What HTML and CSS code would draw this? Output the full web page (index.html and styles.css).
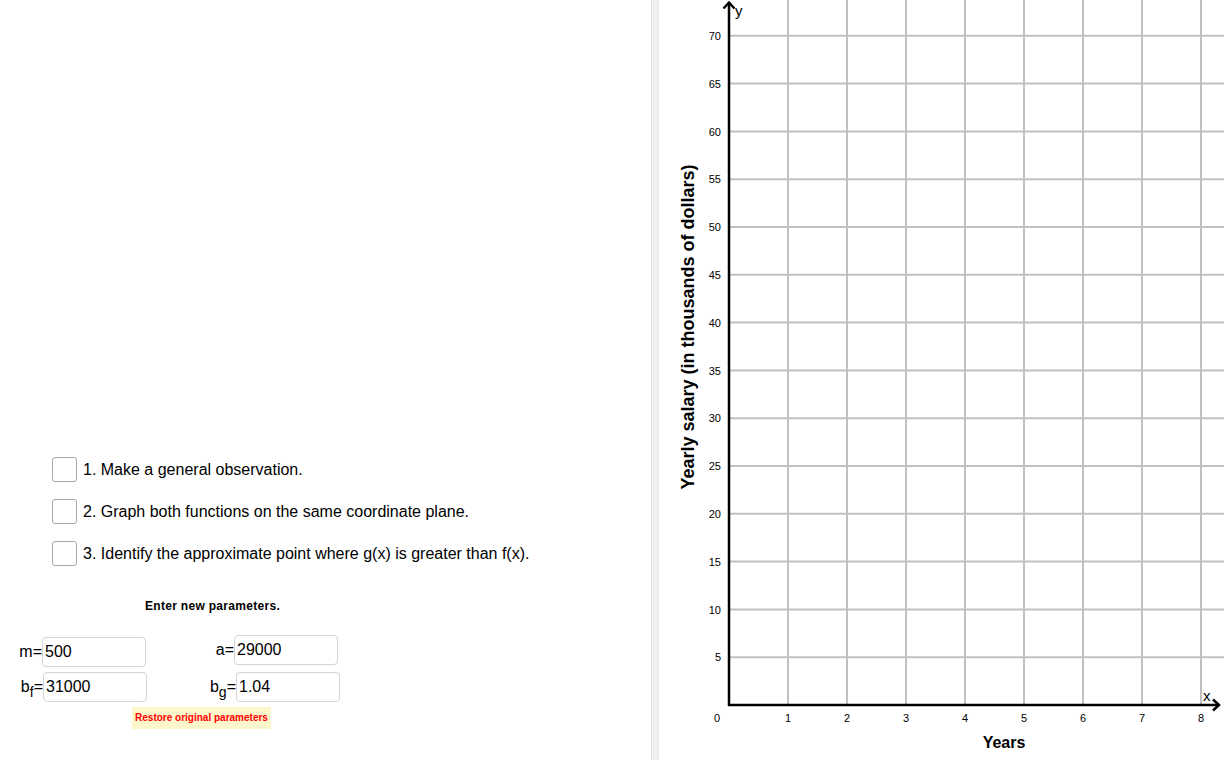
FILE: index.html
```html
<!DOCTYPE html>
<html>
<head>
<meta charset="utf-8">
<link rel="stylesheet" href="styles.css">
</head>
<body>
<div class="app">
  <div class="left">
    <ul class="tasks">
      <li class="task"><span class="box"></span><span class="task-text">1. Make a general observation.</span></li>
      <li class="task"><span class="box"></span><span class="task-text">2. Graph both functions on the same coordinate plane.</span></li>
      <li class="task"><span class="box"></span><span class="task-text">3. Identify the approximate point where g(x) is greater than f(x).</span></li>
    </ul>
    <div class="params-title">Enter new parameters.</div>
    <div class="fields">
      <div class="field-row">
        <div class="field f-m"><span class="flabel">m=</span><span class="finput">500</span></div>
        <div class="field f-a"><span class="flabel">a=</span><span class="finput">29000</span></div>
      </div>
      <div class="field-row">
        <div class="field f-bf"><span class="flabel">b<sub>f</sub>=</span><span class="finput">31000</span></div>
        <div class="field f-bg"><span class="flabel">b<sub>g</sub>=</span><span class="finput">1.04</span></div>
      </div>
    </div>
    <div class="restore">Restore original parameters</div>
  </div>
  <div class="divider"></div>
  <div class="graph">
    <svg class="plot" width="565" height="760" viewBox="659 0 565 760" xmlns="http://www.w3.org/2000/svg">
      <g stroke="#c0c0c0" stroke-width="2">
        <line x1="788" y1="0" x2="788" y2="705"/>
        <line x1="847" y1="0" x2="847" y2="705"/>
        <line x1="906" y1="0" x2="906" y2="705"/>
        <line x1="965" y1="0" x2="965" y2="705"/>
        <line x1="1024" y1="0" x2="1024" y2="705"/>
        <line x1="1083" y1="0" x2="1083" y2="705"/>
        <line x1="1142" y1="0" x2="1142" y2="705"/>
        <line x1="1201" y1="0" x2="1201" y2="705"/>
        <line x1="729" y1="657.2" x2="1224" y2="657.2"/>
        <line x1="729" y1="609.4" x2="1224" y2="609.4"/>
        <line x1="729" y1="561.6" x2="1224" y2="561.6"/>
        <line x1="729" y1="513.8" x2="1224" y2="513.8"/>
        <line x1="729" y1="466" x2="1224" y2="466"/>
        <line x1="729" y1="418.2" x2="1224" y2="418.2"/>
        <line x1="729" y1="370.4" x2="1224" y2="370.4"/>
        <line x1="729" y1="322.6" x2="1224" y2="322.6"/>
        <line x1="729" y1="274.8" x2="1224" y2="274.8"/>
        <line x1="729" y1="227" x2="1224" y2="227"/>
        <line x1="729" y1="179.2" x2="1224" y2="179.2"/>
        <line x1="729" y1="131.4" x2="1224" y2="131.4"/>
        <line x1="729" y1="83.6" x2="1224" y2="83.6"/>
        <line x1="729" y1="35.8" x2="1224" y2="35.8"/>
      </g>
      <g stroke="#000" stroke-width="2.5" fill="none">
        <line x1="729" y1="706" x2="729" y2="2"/>
        <polyline points="723.5,8.5 729,2.5 734.5,8.5"/>
        <line x1="728" y1="705" x2="1219" y2="705"/>
        <polyline points="1213,699.5 1219,705 1213,710.5"/>
      </g>
      <g class="ticks" text-anchor="end">
        <text x="721" y="40">70</text>
        <text x="721" y="88">65</text>
        <text x="721" y="136">60</text>
        <text x="721" y="183">55</text>
        <text x="721" y="231">50</text>
        <text x="721" y="279">45</text>
        <text x="721" y="327">40</text>
        <text x="721" y="375">35</text>
        <text x="721" y="422">30</text>
        <text x="721" y="470">25</text>
        <text x="721" y="518">20</text>
        <text x="721" y="566">15</text>
        <text x="721" y="614">10</text>
        <text x="721" y="661">5</text>
      </g>
      <g class="ticks" text-anchor="middle">
        <text x="717" y="722">0</text>
        <text x="788" y="722">1</text>
        <text x="847" y="722">2</text>
        <text x="906" y="722">3</text>
        <text x="965" y="722">4</text>
        <text x="1024" y="722">5</text>
        <text x="1083" y="722">6</text>
        <text x="1142" y="722">7</text>
        <text x="1201" y="722">8</text>
      </g>
      <text class="axname" x="735" y="16">y</text>
      <text class="axname" x="1203" y="701">x</text>
      <text class="axtitle" x="1004" y="748" text-anchor="middle">Years</text>
      <text class="axtitle axtitle-y" transform="translate(694,327) rotate(-90)" text-anchor="middle">Yearly salary (in thousands of dollars)</text>
    </svg>
  </div>
</div>
</body>
</html>
```
FILE: styles.css
```css
html, body {
  margin: 0;
  padding: 0;
  background: #fff;
  font-family: "Liberation Sans", Arial, sans-serif;
  color: #000;
}
.app {
  display: flex;
  width: 1224px;
  height: 760px;
  overflow: hidden;
}
.left {
  width: 651px;
  flex: none;
  display: flex;
  flex-direction: column;
  align-items: flex-start;
}
.tasks {
  list-style: none;
  margin: 457px 0 0 0;
  padding: 0 0 0 52px;
  display: flex;
  flex-direction: column;
  gap: 17px;
}
.task {
  display: flex;
  align-items: center;
  height: 25px;
  font-size: 16px;
}
.box {
  width: 23px;
  height: 23px;
  border: 1px solid #a8a8a8;
  border-radius: 3px;
  background: #fff;
  margin-right: 6px;
}
.task-text {
  line-height: 25px;
}
.params-title {
  margin: 33px 0 0 145px;
  font-size: 12px;
  font-weight: bold;
  line-height: 14px;
  letter-spacing: 0.3px;
}
.fields {
  margin-top: 24px;
  display: flex;
  flex-direction: column;
  gap: 5px;
}
.field-row {
  display: flex;
}
.field {
  display: flex;
  align-items: center;
}
.f-m, .f-bf {
  width: 192px;
  margin-left: 17px;
}
.f-a {
  position: relative;
  top: -2px;
}
.flabel {
  width: 25px;
  text-align: right;
  font-size: 16px;
  white-space: nowrap;
}
.f-bf .flabel { width: 26px; }
.f-bg .flabel { width: 27px; }
.flabel sub {
  font-size: 14px;
  line-height: 0;
  vertical-align: -5px;
}
.finput {
  width: 100px;
  height: 28px;
  border: 1px solid #d4d4d4;
  border-radius: 4px;
  font-size: 16px;
  line-height: 28px;
  padding-left: 2px;
  box-sizing: content-box;
  background: #fff;
}
.restore {
  margin: 5px 0 0 132px;
  width: 139px;
  height: 22px;
  background: #fff7cc;
  color: #ff0000;
  font-size: 10px;
  font-weight: bold;
  line-height: 22px;
  text-align: center;
}
.divider {
  width: 6px;
  flex: none;
  background: #f0f0f0;
  border-left: 1px solid #e0e0e0;
  border-right: 1px solid #e8e8e8;
}
.graph {
  flex: 1;
  position: relative;
}
.plot {
  display: block;
}
.ticks {
  font-family: "Liberation Sans", Arial, sans-serif;
  font-size: 11px;
  fill: #000;
}
.axname {
  font-family: "Liberation Sans", Arial, sans-serif;
  font-size: 15px;
  fill: #000;
}
.axtitle {
  font-family: "Liberation Sans", Arial, sans-serif;
  font-size: 16px;
  font-weight: bold;
  fill: #000;
}
.axtitle-y {
  font-size: 18px;
}
```
